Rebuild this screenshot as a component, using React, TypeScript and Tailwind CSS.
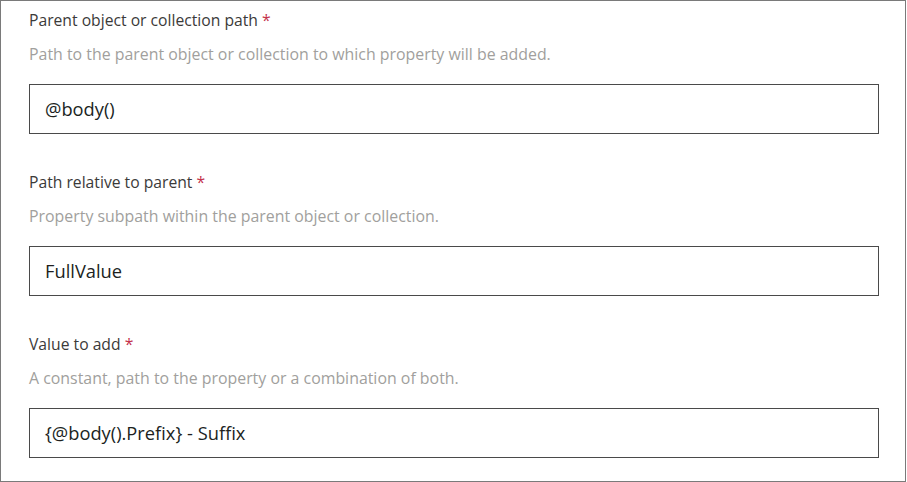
const fields = [
  {
    label: "Parent object or collection path",
    hint: "Path to the parent object or collection to which property will be added.",
    value: "@body()",
  },
  {
    label: "Path relative to parent",
    hint: "Property subpath within the parent object or collection.",
    value: "FullValue",
  },
  {
    label: "Value to add",
    hint: "A constant, path to the property or a combination of both.",
    value: "{@body().Prefix} - Suffix",
  },
];

export default function App() {
  return (
    <div className="w-[906px] h-[482px] bg-white border border-[#7a7a7a] pl-[28px] pt-[9px] font-['Open_Sans',sans-serif]">
      {fields.map((f) => (
        <div key={f.label} className="mb-[38px] flex flex-col">
          <div className="h-[20px] leading-[20px] text-[15.7px] text-[#3b3a39]">
            {f.label} <span className="text-[#c4314b]">*</span>
          </div>
          <div className="mt-[14px] h-[20px] leading-[20px] text-[15.9px] text-[#a19f9d]">{f.hint}</div>
          <div className="mt-[20px] w-[850px] h-[50px] border border-[#4a4a4a] flex items-center px-[15px] text-[18.3px] text-[#201f1e]">
            {f.value}
          </div>
        </div>
      ))}
    </div>
  );
}
